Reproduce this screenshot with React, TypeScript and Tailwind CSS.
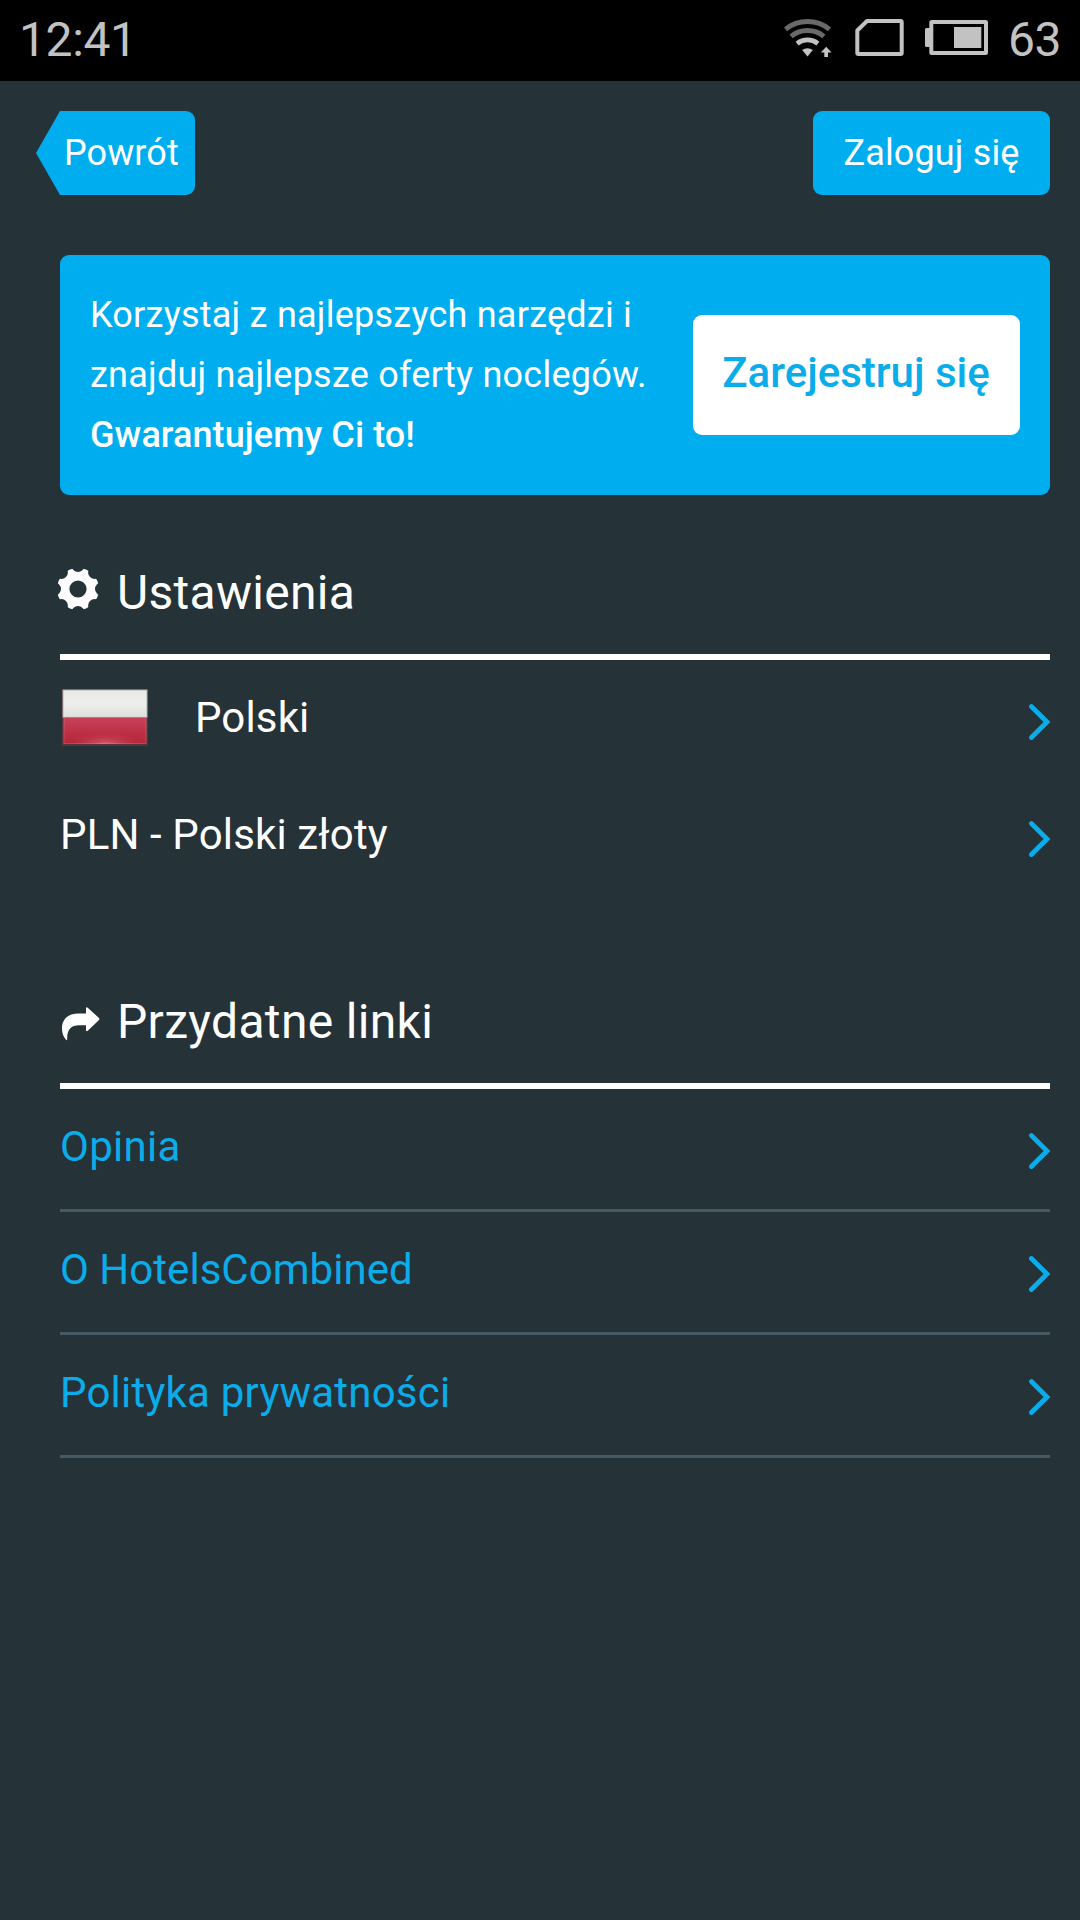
const links = [
  { label: "Opinia", tracking: "tracking-[0.3px]" },
  { label: "O HotelsCombined", tracking: "tracking-[0.03px]" },
  { label: "Polityka prywatności", tracking: "tracking-[0.22px]" },
];

function Chevron() {
  return (
    <svg width="22" height="37" viewBox="0 0 22 37" fill="none" className="overflow-visible">
      <path d="M3.4 3.5L19 19L3.4 34.5" stroke="#0aace9" strokeWidth="4.8" strokeLinecap="round" strokeLinejoin="miter" />
    </svg>
  );
}

function GearIcon() {
  return (
    <svg width="42" height="42" viewBox="-21 -21 42 42">
      <mask id="gear-teeth" maskUnits="userSpaceOnUse" x="-21" y="-21" width="42" height="42">
        <circle r="21" fill="#fff" />
        <circle r="8.6" fill="#000" />
        {[0, 45, 90, 135, 180, 225, 270, 315].map((angle) => (
          <circle key={angle} cy="-23.5" r="6.5" fill="#000" transform={`rotate(${angle})`} />
        ))}
      </mask>
      <rect x="-21" y="-21" width="42" height="42" fill="#fff" mask="url(#gear-teeth)" />
    </svg>
  );
}

function ShareIcon() {
  return (
    <svg width="38" height="34" viewBox="0 0 38 34" fill="#fff">
      <path d="M24 0.8Q24.6 -0.2 26 0.9L37 11Q37.9 12 37 13L26 23.6Q24.6 24.7 24 23.6V18.2H17C9.5 18.2 4.8 22 5.2 32.6Q5 33.6 4 32.8C1.2 29.6 0 25.5 0 21.5C0 11.5 6.5 6.6 17 6.6H24Z" />
    </svg>
  );
}

function PolishFlag() {
  return (
    <svg width="86" height="57" viewBox="0 0 86 57">
      <defs>
        <linearGradient id="flag-white" x1="0" y1="0" x2="0" y2="1">
          <stop offset="0" stopColor="#e9e9e7" />
          <stop offset="0.5" stopColor="#eeeeec" />
          <stop offset="1" stopColor="#dededc" />
        </linearGradient>
        <linearGradient id="flag-red" x1="0" y1="0" x2="0" y2="1">
          <stop offset="0" stopColor="#c9425a" />
          <stop offset="0.4" stopColor="#c0354b" />
          <stop offset="1" stopColor="#b3253b" />
        </linearGradient>
        <radialGradient id="flag-glow" cx="0.5" cy="1" r="0.45">
          <stop offset="0" stopColor="#ee9aa5" stopOpacity="0.5" />
          <stop offset="1" stopColor="#c8304a" stopOpacity="0" />
        </radialGradient>
      </defs>
      <rect width="86" height="57" fill="#55333b" />
      <rect x="0.5" y="0.5" width="85" height="28" fill="#a9abab" />
      <rect x="1.5" y="1.5" width="83" height="27" fill="url(#flag-white)" />
      <rect x="1.5" y="28.5" width="83" height="26.5" fill="url(#flag-red)" />
      <rect x="1.5" y="28.5" width="83" height="26.5" fill="url(#flag-glow)" />
      <rect x="2" y="2" width="82" height="52.5" fill="none" stroke="#fff" strokeOpacity="0.15" />
    </svg>
  );
}

function StatusBar() {
  return (
    <div className="flex h-[81px] items-center bg-black px-[19px] text-[48px] leading-[80px] text-[#c2c2c2]">
      <span className="h-[81px] flex-1 tracking-[-0.4px]">12:41</span>
      <svg className="mr-[16px]" width="212" height="81" viewBox="780 0 212 81" fill="none">
        <g strokeWidth="4.8">
          <path d="M785.5 29.3A35 35 0 0 1 829.5 29.3" stroke="#696969" />
          <path d="M791.1 36.3A26 26 0 0 1 823.9 36.3" stroke="#696969" />
          <path d="M797.1 43.6A16.6 16.6 0 0 1 817.9 43.6" stroke="#c2c2c2" />
        </g>
        <path d="M807.5 56.5L802.2 50A8.5 8.5 0 0 1 812.8 50Z" fill="#c2c2c2" />
        <path d="M826.2 46.7L831.6 52.6H828V57H824.3V52.6H820.8Z" fill="#c2c2c2" />
        <path d="M867 21H900.5Q901.7 21 901.7 22.2V52.8Q901.7 54 900.5 54H858.5Q857.3 54 857.3 52.8V30.5Z" stroke="#c2c2c2" strokeWidth="4" strokeLinejoin="round" />
        <rect x="931.3" y="22" width="54.7" height="31" rx="0.5" stroke="#c2c2c2" strokeWidth="4" />
        <rect x="925" y="28" width="6" height="19" rx="1.5" fill="#c2c2c2" />
        <rect x="954" y="27" width="27.3" height="21" fill="#c2c2c2" />
      </svg>
      <span className="h-[81px] tracking-[-0.5px]">63</span>
    </div>
  );
}

export default function App() {
  return (
    <div className="min-h-[1920px] w-[1080px] bg-[#253238] font-['Roboto',sans-serif] text-white">
      <StatusBar />

      <header className="flex justify-between pt-[30px] pr-[30px] pl-[36px]">
        <button className="flex h-[84px] text-[36px] leading-[84px]">
          <svg width="24" height="84" viewBox="0 0 24 84">
            <path d="M24 0V84L0 42Z" fill="#00aeef" />
          </svg>
          <span className="h-[84px] w-[135px] rounded-r-[9px] bg-[#00aeef] pl-[4px] text-left tracking-[0.1px]">Powrót</span>
        </button>
        <button className="h-[84px] w-[237px] rounded-[9px] bg-[#00aeef] text-[36px] leading-[82px] tracking-[0.15px]">Zaloguj się</button>
      </header>

      <main className="pt-[60px] pr-[30px] pl-[60px]">
        <section className="flex h-[240px] items-center justify-between rounded-[9px] bg-[#00aeef] px-[30px]">
          <p className="text-[36px] leading-[60px] tracking-[0.24px] whitespace-nowrap">
            Korzystaj z najlepszych narzędzi i<br />
            znajduj najlepsze oferty noclegów.<br />
            <span className="font-medium tracking-[0.07px]">Gwarantujemy Ci to!</span>
          </p>
          <button className="h-[120px] w-[327px] rounded-[9px] bg-white pr-[1px] pb-[6px] text-[42px] font-medium text-[#0aace9]">
            Zarejestruj się
          </button>
        </section>

        <section className="pt-[60px]">
          <h2 className="flex h-[105px] border-b-[6px] border-white text-[48px] leading-[75px] tracking-[0.3px]">
            <span className="-ml-[3px] w-[60px] pt-[13px]">
              <GearIcon />
            </span>
            Ustawienia
          </h2>
          <div className="flex h-[117px] justify-between text-[42px] leading-[115px] tracking-[0.14px]">
            <span className="flex">
              <span className="w-[135px] pt-[29px] pl-[2px]">
                <PolishFlag />
              </span>
              Polski
            </span>
            <span className="pt-[43px]">
              <Chevron />
            </span>
          </div>
          <div className="flex h-[117px] justify-between text-[42px] leading-[115px] tracking-[0.14px]">
            <span>PLN - Polski złoty</span>
            <span className="pt-[43px]">
              <Chevron />
            </span>
          </div>
        </section>

        <section className="pt-[90px]">
          <h2 className="flex h-[105px] border-b-[6px] border-white text-[48px] leading-[75px] tracking-[0.32px]">
            <span className="w-[57px] pt-[23px] pl-[2px]">
              <ShareIcon />
            </span>
            Przydatne linki
          </h2>
          {links.map(({ label, tracking }) => (
            <a key={label} className="flex h-[123px] justify-between border-b-[3px] border-[#455a64] text-[42px] leading-[115px] text-[#0aace9]">
              <span className={tracking}>{label}</span>
              <span className="pt-[43px]">
                <Chevron />
              </span>
            </a>
          ))}
        </section>
      </main>
    </div>
  );
}
